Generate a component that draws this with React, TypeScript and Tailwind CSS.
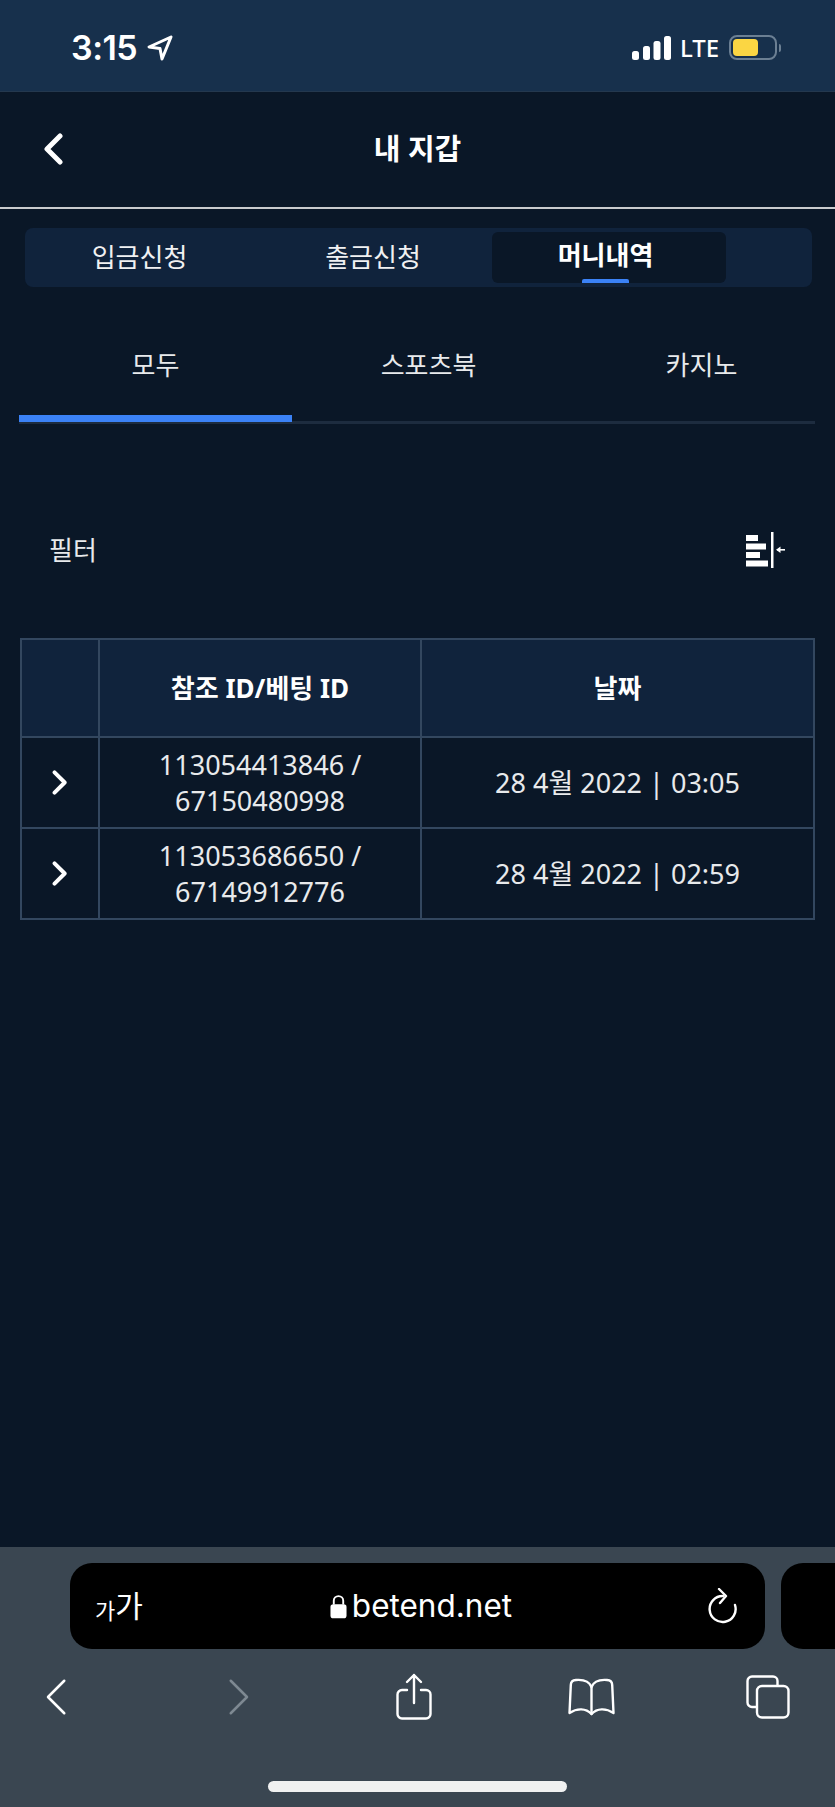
import React from "react";

const KR = "font-['Noto_Sans','Noto_Sans_CJK_KR',sans-serif]";

function Chevron({ dir, className, sw = 5 }: { dir: "left" | "right"; className: string; sw?: number }) {
  return (
    <svg viewBox="0 0 20 32" className={className} fill="none" stroke="currentColor" strokeWidth={sw} strokeLinecap="round" strokeLinejoin="round">
      <path d={dir === "left" ? "M17 3 L4 16 L17 29" : "M3 3 L16 16 L3 29"} />
    </svg>
  );
}

function StatusBar() {
  return (
    <div className="h-[92px] shrink-0 bg-[#17304c] flex items-start justify-between pl-[71px] pr-[54px] pt-[35px] text-white border-b border-[#24384e]">
      <div className="flex items-center gap-[10px] h-[25px]">
        <span className="font-['Inter',sans-serif] font-semibold text-[34px] leading-[25px] tracking-[-0.5px]">3:15</span>
        <svg viewBox="0 0 26 26" className="w-[26px] h-[26px]" fill="none" stroke="white" strokeWidth="3" strokeLinejoin="round">
          <path d="M24 2 L2 12 L13 13.5 L15 24 Z" />
        </svg>
      </div>
      <div className="flex items-center h-[25px]">
        <svg viewBox="0 0 39 24" className="w-[39px] h-[24px]" fill="white">
          <rect x="0" y="15" width="7" height="9" rx="2.5" />
          <rect x="11" y="10" width="7" height="14" rx="2.5" />
          <rect x="21.5" y="5" width="7" height="19" rx="2.5" />
          <rect x="32" y="0" width="7" height="24" rx="2.5" />
        </svg>
        <span className="ml-[9px] font-['Noto_Sans',sans-serif] font-medium text-[24px] leading-[25px] w-[40px]">LTE</span>
        <div className="ml-[9px] w-[48px] h-[25px] rounded-[8px] border-2 border-[#6b7f93] p-[2px] flex">
          <div className="w-[25px] h-full rounded-[4px] bg-[#fbd643]" />
        </div>
        <div className="ml-[2px] w-[2px] h-[8px] rounded-r-full bg-[#6b7f93]" />
      </div>
    </div>
  );
}

function Header() {
  return (
    <div className="h-[117px] shrink-0 flex items-center border-b-2 border-[#c9cbce] pb-[2px]">
      <Chevron dir="left" className="w-[20px] h-[32px] ml-[43px] text-white" />
      <div className="flex-1 text-center text-[29px] font-bold text-white pr-[63px] mt-[1px]">내 지갑</div>
    </div>
  );
}

function Tabs() {
  return (
    <div className="mt-[19px] mx-[25px] w-[787px] h-[59px] rounded-[8px] bg-[#10233c] py-[4px] flex text-[26px] text-[#f0f1f2]">
      <div className="w-[231px] pr-[2px] flex items-center justify-center">입금신청</div>
      <div className="w-[236px] pr-[2px] flex items-center justify-center">출금신청</div>
      <div className="w-[234px] rounded-[6px] bg-[#0a1727] flex flex-col items-center font-bold text-white pr-[7px]">
        <div className="flex-1 flex items-center justify-center">머니내역</div>
        <div className="w-[47px] h-[4px] rounded-t-[2px] bg-[#3b82f6]" />
      </div>
    </div>
  );
}

function SubTabs() {
  const col = "h-[135px] w-[273px] shrink-0 flex items-center justify-center pt-[24px] text-[26px] text-[#e8eaec] -mt-[1px]";
  return (
    <div className="mx-[19px] w-[796px] h-[137px] border-b-[3px] border-[#1d2c3f] flex">
      <div className="w-[273px] shrink-0 relative">
        <div className={col}>모두</div>
        <div className="absolute left-0 right-0 bottom-[-1px] h-[7px] bg-[#3b82f6]" />
      </div>
      <div className={col}>스포츠북</div>
      <div className={col}>카지노</div>
    </div>
  );
}

function Filter() {
  return (
    <div className="mt-[101px] h-[50px] flex items-center justify-between pl-[49px] pr-[50px] text-[26px] text-[#e8eaec]">
      <span>필터</span>
      <svg viewBox="0 0 39 36" className="w-[39px] h-[36px]" fill="white">
        <rect x="0" y="3" width="12" height="6" />
        <rect x="0" y="11.5" width="20" height="6" />
        <rect x="0" y="20" width="14" height="6" />
        <rect x="0" y="28.5" width="22" height="6" />
        <rect x="25" y="0" width="2.5" height="36" />
        <rect x="31" y="17" width="8" height="1.6" />
        <path d="M30 17.8 L34.5 14.5 V21 Z" />
      </svg>
    </div>
  );
}

const rows = [
  ["113054413846 /", "67150480998", "28 4월 2022 | 03:05"],
  ["113053686650 /", "67149912776", "28 4월 2022 | 02:59"],
];

function DataTable() {
  const bd = "border-2 border-[#33475f]";
  return (
    <table className="mt-[63px] ml-[20px] w-[795px] border-collapse table-fixed text-[#e8eaec]">
      <colgroup>
        <col className="w-[78px]" />
        <col className="w-[322px]" />
        <col />
      </colgroup>
      <thead>
        <tr className="h-[98px] bg-[#10233c] text-white text-[26px] font-bold">
          <th className={bd} />
          <th className={bd + " font-bold"}>참조 ID/베팅 ID</th>
          <th className={bd + " font-bold"}>날짜</th>
        </tr>
      </thead>
      <tbody>
        {rows.map((r) => (
          <tr key={r[0]} className="h-[91px] text-[27px] leading-[36px]">
            <td className={bd}>
              <div className="flex justify-center">
                <Chevron dir="right" className="w-[16px] h-[25px] text-white" sw={5} />
              </div>
            </td>
            <td className={bd + " text-center"}>
              <div>{r[0]}</div>
              <div>{r[1]}</div>
            </td>
            <td className={bd + " text-center"}>{r[2]}</td>
          </tr>
        ))}
      </tbody>
    </table>
  );
}

function SafariBar() {
  return (
    <div className="h-[260px] shrink-0 bg-[#3a4651] flex flex-col text-white overflow-hidden">
      <div className="mt-[16px] flex gap-[16px] pl-[70px] w-[1000px]">
        <div className="w-[695px] h-[86px] rounded-[22px] bg-black flex items-center justify-between pl-[25px] pr-[27px]">
          <span className="leading-none w-[52px] flex items-end"><span className="text-[22px]">가</span><span className="text-[30px]">가</span></span>
          <span className="-ml-[13px] flex items-center gap-[5px] text-[31.5px] font-['Inter',sans-serif]">
            <svg viewBox="0 0 18 26" className="w-[17px] h-[25px]" fill="white">
              <path d="M4 11 V7 a5 5 0 0 1 10 0 V11" fill="none" stroke="white" strokeWidth="2" />
              <rect x="0.5" y="10.5" width="17" height="15" rx="3" />
            </svg>
            betend.net
          </span>
          <svg viewBox="0 0 30 36" className="w-[30px] h-[36px]" fill="none" stroke="white" strokeWidth="2.4" strokeLinecap="round" strokeLinejoin="round">
            <path d="M15 8 A13 13 0 1 0 27 17" />
            <path d="M11 1 L18 8 L12 15" />
          </svg>
        </div>
        <div className="w-[200px] h-[86px] rounded-[22px] bg-black" />
      </div>
      <div className="mt-[24px] h-[47px] flex items-center">
        <Chevron dir="left" className="ml-[43px] w-[25px] h-[40px] text-white" sw={2} />
        <Chevron dir="right" className="ml-[159px] w-[25px] h-[40px] text-[#7e8992]" sw={2} />
        <svg viewBox="0 0 36 47" className="ml-[144px] w-[36px] h-[47px]" fill="none" stroke="white" strokeWidth="2.4" strokeLinecap="round" strokeLinejoin="round">
          <path d="M11 17 H6 a4.5 4.5 0 0 0 -4.5 4.5 V41 a4.5 4.5 0 0 0 4.5 4.5 H30 a4.5 4.5 0 0 0 4.5 -4.5 V21.5 A4.5 4.5 0 0 0 30 17 H25" />
          <path d="M18 30 V2 M11 9 L18 2 L25 9" />
        </svg>
        <svg viewBox="0 0 47 38" className="ml-[136px] w-[47px] h-[38px]" fill="none" stroke="white" strokeWidth="2.4" strokeLinecap="round" strokeLinejoin="round">
          <path d="M23.5 9 C21 3 14 1.5 8 2 C4 2.3 2.8 4 2.8 7 L1.5 35 C9 30 18 30 23.5 36 C29 30 38 30 45.5 35 L44.2 7 C44.2 4 43 2.3 39 2 C33 1.5 26 3 23.5 9 Z" />
          <path d="M23.5 9 V36" />
        </svg>
        <svg viewBox="0 0 44 44" className="ml-[131px] w-[44px] h-[44px]" fill="none" stroke="white" strokeWidth="2.4" strokeLinejoin="round">
          <path d="M10.5 32 H6 a4.5 4.5 0 0 1 -4.5 -4.5 V6 A4.5 4.5 0 0 1 6 1.5 H27 A4.5 4.5 0 0 1 31.5 6 V10.5" />
          <rect x="11" y="11" width="31.5" height="31.5" rx="5" />
        </svg>
      </div>
      <div className="mt-[61px] ml-[268px] w-[299px] h-[11px] rounded-full bg-[#f0f1f1]" />
    </div>
  );
}

export default function App() {
  return (
    <div className={"w-[835px] h-[1807px] flex flex-col bg-[#0a1727] overflow-hidden " + KR}>
      <StatusBar />
      <Header />
      <div className="flex-1 min-h-0 flex flex-col">
        <Tabs />
        <SubTabs />
        <Filter />
        <DataTable />
      </div>
      <SafariBar />
    </div>
  );
}
